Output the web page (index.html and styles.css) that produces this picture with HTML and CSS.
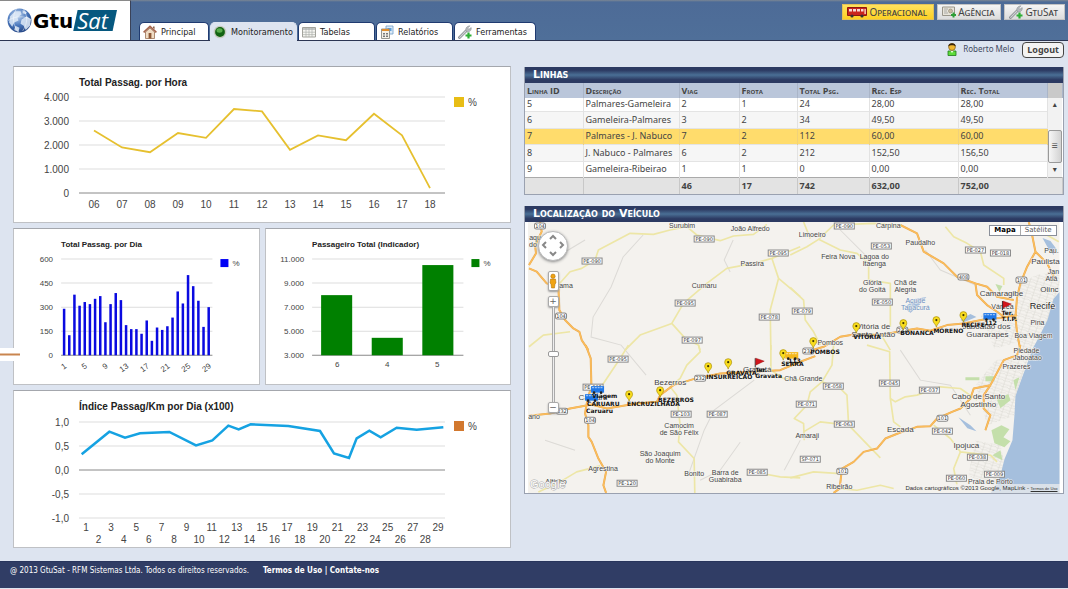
FILE: index.html
```html
<!DOCTYPE html>
<html lang="pt-BR">
<head>
<meta charset="utf-8">
<title>GtuSat - Monitoramento</title>
<link rel="stylesheet" href="styles.css">
</head>
<body>
<header class="top">
  <a class="logo" href="#" aria-label="GtuSat">
    <svg class="globe" viewBox="0 0 24 24" aria-hidden="true">
      <defs><radialGradient id="gl" cx=".4" cy=".3" r=".8"><stop offset="0" stop-color="#c9dcf3"/><stop offset=".5" stop-color="#4a78bd"/><stop offset="1" stop-color="#1c3a78"/></radialGradient></defs>
      <circle cx="12" cy="12" r="11.5" fill="url(#gl)"/>
      <path d="M3 8l5-5 5 0 1 3-4 3 1 3-4 2-2 4-3-4zM14 11l5-3 4 3-1 6-4 4-2-4-3-2zM15 2l4 2-1 2-3-1zM8 17l4 2-1 4-4-2z" fill="#dfeaf7" opacity=".85"/>
      <path d="M1 12c6-4 15-5 22-1M9 1c-4 6-4 15 2 22M16 1c4 7 4 14-1 21" fill="none" stroke="#fff" stroke-width=".6" opacity=".7"/>
    </svg>
    <span class="logo-gtu">Gtu</span><span class="logo-sat">Sat</span>
  </a>
  <nav class="tabs">
    <a class="tab" href="#"><svg viewBox="0 0 14 14"><path d="M2.500 7v6.500h9V7L7 3z" fill="#f0dcc4" stroke="#9a7256" stroke-width=".8"/><path d="M.6 7.400L7 1.300l6.400 6.100" fill="none" stroke="#a5654c" stroke-width="1.600"/><path d="M10 1.500h1.600V4L10 3z" fill="#8c6248"/><path d="M5.600 8h2.800v5.500H5.600z" fill="#8e5836"/></svg>Principal</a>
    <a class="tab active" href="#" aria-current="page"><svg viewBox="0 0 14 14"><circle cx="7" cy="7" r="6.300" fill="#c6cabf"/><circle cx="7" cy="7" r="4.900" fill="#126312"/><ellipse cx="6.500" cy="5.500" rx="3" ry="2.200" fill="#58ad4c"/></svg>Monitoramento</a>
    <a class="tab" href="#"><svg viewBox="0 0 14 14"><path d="M.5 2.500h13v9.500H.5z" fill="#f6f6f2" stroke="#a3a39c"/><path d="M1 3h12v2H1z" fill="#c2c5c4"/><path d="M1 7.200h12M1 9.600h12M4 3v9M7 3v9M10 3v9" stroke="#aeb0ac" stroke-width=".7"/></svg>Tabelas</a>
    <a class="tab" href="#"><svg viewBox="0 0 14 14"><path d="M6 1h7v8H6z" fill="#dcebf8" stroke="#6f9cc6" stroke-width=".8"/><path d="M7.500 3h4v3h-4z" fill="#5f9fd8"/><path d="M1.500 4h8v9.500h-8z" fill="#f4f1e8" stroke="#8b8b86" stroke-width=".9"/><path d="M2 4h7v2H2z" fill="#e08d2c"/><path d="M3 8h2v1.500H3zM6 8h2v1.500H6zM3 10.500h2V12H3zM6 10.500h2V12H6z" fill="#77787a"/></svg>Relatórios</a>
    <a class="tab" href="#"><svg viewBox="0 0 14 14"><use href="#wrench"/></svg>Ferramentas</a>
  </nav>
  <nav class="areas">
    <button class="area on" type="button"><svg class="wide" viewBox="0 0 20 12"><path d="M.5 1.500h19v8H.5z" fill="#c9251d" stroke="#8c1611"/><path d="M2 3h3v2.500H2zM6 3h3v2.500H6zM10 3h3v2.500h-3zM14 3h2.500v2.500H14z" fill="#f7dcd6"/><path d="M17.300 3h1.700v5h-1.700z" fill="#f5b5a5"/><circle cx="5" cy="10" r="1.600" fill="#333"/><circle cx="15" cy="10" r="1.600" fill="#333"/></svg>Operacional</button>
    <button class="area" type="button"><svg viewBox="0 0 14 14"><path d="M.5 2h12v8.500H.5z" fill="#e8e4da" stroke="#99958a"/><path d="M2 4h4M2 6h3M2 8h4" stroke="#999" stroke-width=".8"/><circle cx="8.500" cy="6" r="2" fill="#c9bba4" stroke="#8d8472" stroke-width=".6"/><path d="M9 10h5M11.500 7.500v5" stroke="#2d9e36" stroke-width="2"/></svg>Agência</button>
    <button class="area" type="button"><svg viewBox="0 0 14 14"><g id="wrench"><path d="M1.500 12.500L8 6" stroke="#888c90" stroke-width="2.800" stroke-linecap="round"/><path d="M1.700 12.300L8 6" stroke="#d0d3d5" stroke-width="1.200" stroke-linecap="round"/><path d="M12 .8L9.800 3l1 1.300 2.400-1.700c.6 2.500-1.500 4.800-4.500 4.200-2-2-.8-5.800 3.300-6z" fill="#b6babd" stroke="#868a8e" stroke-width=".5"/><path d="M7.500 10.500h6M10.500 7.500v6" stroke="#2fae35" stroke-width="2.200"/></g></svg>GtuSat</button>
  </nav>
</header>

<div class="userbar">
  <svg class="avatar" viewBox="0 0 10 14" aria-hidden="true"><path d="M1 9h8v4.500H1z" fill="#5edc3c" stroke="#1f7a1a" stroke-width=".8"/><path d="M3.500 9L5 11l1.500-2z" fill="#e9ffe2"/><circle cx="5" cy="5" r="3.400" fill="#f0b62e" stroke="#6b4b0c" stroke-width=".6"/><path d="M1.200 4.500C1 0 9 0 8.800 4.500 7 2.800 3 2.800 1.200 4.500z" fill="#3a240a"/></svg>
  <span>Roberto Melo</span>
  <button class="logout" type="button">Logout</button>
</div>

<main class="board">
  <section class="charts">
    <div class="card"><svg id="hora" viewBox="14 67 496 155" role="img" aria-label="Total Passag. por Hora"></svg></div>
    <div class="pair">
      <div class="card"><svg id="dia" viewBox="14 229 244 155" role="img" aria-label="Total Passag. por Dia"></svg></div>
      <div class="card"><svg id="total" viewBox="265 229 244 155" role="img" aria-label="Passageiro Total (Indicador)"></svg></div>
    </div>
    <div class="card"><svg id="indice" viewBox="14 391 496 156" role="img" aria-label="Índice Passag/Km por Dia (x100)"></svg></div>
    <svg class="stub" viewBox="0 0 20 13" aria-hidden="true"><path d="M0 0h20v13H0z" fill="#fff"/><path d="M0 6.500h20" stroke="#c9854f" stroke-width="2"/></svg>
  </section>

  <section class="side">
    <div class="panel">
      <h2 class="bar">Linhas</h2>
      <table class="lines">
        <colgroup><col class="c-id"><col class="c-desc"><col class="c-viag"><col class="c-frota"><col class="c-psg"><col class="c-rec"><col class="c-rec"><col class="c-scroll"></colgroup>
        <thead><tr><th>Linha ID</th><th>Descrição</th><th>Viag</th><th>Frota</th><th>Total Psg.</th><th>Rec. Esp</th><th>Rec. Total</th><th class="corner"></th></tr></thead>
        <tbody>
          <tr class="cut"><td>5</td><td>Palmares-Gameleira</td><td>2</td><td>1</td><td>24</td><td>28,00</td><td>28,00</td>
            <td class="scroll" rowspan="5"><div class="track"><button type="button" aria-label="Subir">▴</button><span class="space"></span><span class="grip">☰</span><button type="button" aria-label="Descer">▾</button></div></td></tr>
          <tr class="alt"><td>6</td><td>Gameleira-Palmares</td><td>3</td><td>2</td><td>34</td><td>49,50</td><td>49,50</td></tr>
          <tr class="sel"><td>7</td><td>Palmares - J. Nabuco</td><td>7</td><td>2</td><td>112</td><td>60,00</td><td>60,00</td></tr>
          <tr class="alt"><td>8</td><td>J. Nabuco - Palmares</td><td>6</td><td>2</td><td>212</td><td>152,50</td><td>156,50</td></tr>
          <tr><td>9</td><td>Gameleira-Ribeirao</td><td>1</td><td>1</td><td>0</td><td>0,00</td><td>0,00</td></tr>
        </tbody>
        <tfoot><tr><td></td><td></td><td>46</td><td>17</td><td>742</td><td>632,00</td><td colspan="2">752,00</td></tr></tfoot>
      </table>
    </div>

    <div class="panel">
      <h2 class="bar">Localização do Veículo</h2>
      <div class="map">
        <svg id="map" viewBox="528 222 531 271" role="img" aria-label="Mapa">
          <defs>
            <g id="pin"><path d="M0 0C-.5-3-3.500-4-3.500-7a3.500 3.500 0 0 1 7 0C3.500-4 .5-3 0 0z" fill="#f8dc1e" stroke="#a08400" stroke-width=".6"/><circle cy="-7" r="1.100" fill="#3b3200"/></g>
            <g id="flag"><path d="M0 9V0" stroke="#333"/><path d="M.5 0L9 3 .5 7z" fill="#d3161c" stroke="#8c0d10" stroke-width=".4"/></g>
            <g id="bus"><path d="M0 1h13v6.500H0z"/><path d="M1 2.500h11" stroke="#fff" stroke-opacity=".55" stroke-width="1.200" stroke-dasharray="2 .8"/><circle cx="3" cy="7.500" r="1.300" fill="#222"/><circle cx="10" cy="7.500" r="1.300" fill="#222"/></g>
            <pattern id="streets" width="7" height="6" patternUnits="userSpaceOnUse" patternTransform="rotate(18)"><path d="M0 1h7M2 0v6M0 4l7-1" stroke="#d9d6d0" stroke-width=".5"/></pattern>
          </defs>
          <path d="M528 222h531v271H528z" fill="#f4f2ee"/>
          <path d="M1019 285l16-10 24-4v30l-8 25-12 40-16-2-8-35zM980 315l40-8 14 30-40 12zM995 360l32-5-12 60-28 10-12-40zM975 440l25 5 6 25-14 18-24-13z" fill="url(#streets)"/>
          <g fill="none" stroke="#dcdad6" stroke-width="1">
            <path d="M643 235l-20 22-12 30-18 30-2 20 30 8 25 30M733 240l-9 20 6 12M688 475l16-45 10-20 40-30M560 255l25-15M545 440l30 10M800 440l-16 30M925 250l15 20 35 15M840 230l30 30M900 350l20 30 30 5 20 30M700 480l20-10 20-28"/>
          </g>
          <g class="water">
            <path d="M1059 292L1053 299 1047 320 1038 338 1032 349 1028 360 1021 379 1015 396 1014 415 1012 440 1004 459 1000 475 994 487 990 493H1059z"/>
            <path d="M904 308l10-9 12-2-7 8-9 8zM1042 238l8 3 6 8-3 6-6-8zM960 320l10-6 6 3-12 5zM958 417l12 8 6 6-9-3z"/>
          </g>
          <path d="M991 430l10-5 8 4-6 8 7 4-6 6-10-4zM965 377h14v3h-14zM985 376h9v5h-9zM996 398l12-4 2 6-10 8zM995 284l7 2-3 6zM1013 380l6-3-4 13zM992 455l8-5 2 10z" fill="#c4dfab"/>
          <g class="minor">
            <g transform="translate(520 200) scale(.3333)"><path d="M27 440l43-35 80-10M110 260l40-45 35-10 40-25 10-30 95-50 70 3 50-13 50-10 30 25 70 17 40-14 60-5 40-30M315 450l45-45 95-35 35-60 70-60 60-45 80-15 55-15 85-35M755 175l20 60 65 55M775 235l-25 95 2 120M455 370l45 50 35 15 5 15"/></g>
            <g transform="translate(790 200) scale(.3333)"><path d="M0 165l50-25 35-22 45-43 120-5 80 5M85 118l65 32 50 10 35 30v50l65 10v130M465 80l25 30 40 20 40 25 10 40 60 40v20M0 262l40 38 5 60 25 35 20 40M270 400l30 50M40 66l20 50M760 100l45 25"/></g>
            <g transform="translate(520 345) scale(.3333)"><path d="M215 150l35-35 50-75 25-40M535 0l5 20-40 40-20 40-30 25 20 25 10 90-5 50 47 50 2 103M55 440l65-30 50-30 70-18M752 0v75l38 25 50 5M700 380l80 15 60 3"/></g>
            <g transform="translate(790 345) scale(.3333)"><path d="M130 0l-5 60-30 50-35 30-10 40-38 40 28 15 2 50M95 110l55 20 20 20 5 90 95 98M40 260l50-30 85 10M230 0l68 20 2 140 15 10 30-15 35-5 70-25 60 5 50 35M300 160l10 70 20 15M0 398l70-18 80 5M150 430l50 5 70-15 40 10M430 240l50 40 30 40-20 50 10 50M510 320l90 10 20 20"/></g>
          </g>
          <g id="majors"></g>
          <g id="shields"></g>
          <g id="places"></g>
          <g id="stops"></g>
          <text class="brand" x="530" y="488">Google</text>
        </svg>
        <div class="pan">
          <button type="button" class="n" aria-label="Norte"><svg viewBox="0 0 8 8"><path d="M1 6l3-3 3 3"/></svg></button>
          <button type="button" class="w" aria-label="Oeste"><svg viewBox="0 0 8 8"><path d="M6 1L3 4l3 3"/></svg></button>
          <button type="button" class="e" aria-label="Leste"><svg viewBox="0 0 8 8"><path d="M2 1l3 3-3 3"/></svg></button>
          <button type="button" class="s" aria-label="Sul"><svg viewBox="0 0 8 8"><path d="M1 2l3 3 3-3"/></svg></button>
        </div>
        <div class="zoom">
          <button type="button" class="man" aria-label="Street View"><svg viewBox="0 0 8 16"><circle cx="4" cy="3.200" r="2.200" fill="#f0a414" stroke="#a86a08" stroke-width=".5"/><path d="M1.500 6h5l.5 4-1 1-.5 4h-3L2 11l-1-1z" fill="#f0a414" stroke="#a86a08" stroke-width=".5"/></svg></button>
          <button type="button" class="step" aria-label="Aumentar zoom">+</button>
          <input class="level" type="range" min="0" max="18" value="9" aria-label="Zoom">
          <button type="button" class="step" aria-label="Diminuir zoom">−</button>
        </div>
        <div class="kinds"><button type="button" class="kind on">Mapa</button><button type="button" class="kind">Satélite</button></div>
        <p class="credit">Dados cartográficos ©2013 Google, MapLink - <a href="#">Termos de Uso</a></p>
      </div>
    </div>
  </section>
</main>

<footer class="foot">
  <span>@ 2013 GtuSat - RFM Sistemas Ltda. Todos os direitos reservados.</span>
  <nav><a href="#">Termos de Uso</a> | <a href="#">Contate-nos</a></nav>
</footer>
<script src="app.js"></script>
</body>
</html>
```
FILE: styles.css
```css
* { box-sizing: border-box; }
body { margin: 0; background: #dde4f0; color: #444; font: 9px/14px "Noto Sans", "Open Sans", sans-serif; }
button { font: inherit; color: inherit; margin: 0; padding: 0; cursor: pointer; }
a { color: inherit; text-decoration: none; }
svg { display: block; }

.top { display: flex; height: 41px; background: linear-gradient(#7b8694 0, #4d6b97 2px, #4f6f99); border-bottom: 1px solid #2b3553; }
.logo { display: flex; align-items: center; width: 131px; padding-left: 7px; background: #fff; border-right: 1px solid #3a4258; border-top: 1px solid #8a8a8a; }
.globe { width: 25px; height: 25px; }
.logo-gtu { color: #000; font: bold 20px/22px "DejaVu Sans", sans-serif; margin-left: 1px; }
.logo-sat { padding: 0 9px 0 4px; background: #06587f; color: #fff; font: italic 22px/21px "Open Sans", sans-serif; clip-path: polygon(10% 0, 100% 0, 90% 100%, 0 100%); }
.tabs { display: flex; align-items: flex-end; margin-left: 8px; gap: 1px; }
.tab { display: flex; align-items: center; gap: 4px; height: 18px; min-width: 77px; padding: 0 3px; background: #fff; border: 1px solid #1f3a70; border-bottom: 0; border-radius: 5px 5px 0 0; color: #222; font: 9px/16px "DejaVu Sans Condensed", "DejaVu Sans", sans-serif; }
.tab:first-child { min-width: 70px; }
.tab:last-child { min-width: 82px; }
.tab svg { width: 14px; height: 14px; }
.tab.active { min-width: 87px; padding: 0 2px; background: #dde4f0; border-color: #dde4f0; margin-bottom: -1px; height: 19px; }
.areas { display: flex; gap: 3px; margin-left: auto; padding: 4px 3px 0 0; }
.area { display: flex; align-items: center; gap: 2px; height: 16px; padding: 0 6px 0 4px; border: 1px solid #c3c3c3; background: linear-gradient(#f5f5f5, #dcdcdc); color: #444; font: small-caps 10px/14px "Noto Sans", sans-serif; }
.area svg { width: 14px; height: 14px; }
.area svg.wide { width: 20px; height: 12px; }
.area.on { background: linear-gradient(#ffe25e, #fdd023); border-color: #e3c257; }

.userbar { display: flex; align-items: flex-start; justify-content: flex-end; height: 25px; padding: 1px 4px 0 0; color: #3f4a60; font-size: 8px; }
.avatar { width: 10px; height: 14px; margin-right: 6px; }
.logout { height: 16px; margin-left: 8px; padding: 0 4px; border: 1px solid #444; border-radius: 4px; background: #f3f3f3; color: #444; font: bold 9px/12px "Noto Sans", sans-serif; }

.board { display: grid; grid-template-columns: minmax(0, 498fr) minmax(0, 538fr); gap: 13px; align-items: start; padding: 0 6px 13px 13px; }
.charts { position: relative; display: grid; gap: 5px; }
.pair { display: grid; grid-template-columns: 1fr 1fr; gap: 5px; }
.card { background: #fff; border: 1px solid #bfc1c5; border-top-color: #a4a7ad; }
.card svg { width: 100%; }
.stub { position: absolute; left: -13px; top: 282px; width: 20px; height: 13px; }
.t { font-family: "Liberation Sans", sans-serif; font-size: 10px; fill: #444; }
.t.small { font-size: 8px; }
.t.title { font-weight: bold; fill: #222; }

.side { display: grid; gap: 11px; padding-top: 1px; }
.bar { margin: 0; height: 16px; padding-left: 8px; background: linear-gradient(#2c3a62 20%, #4a6f95 50%, #2c3a62 80%); color: #fff; font: bold small-caps 11px/16px "DejaVu Sans", sans-serif; }
.panel { border: 1px solid #9aa1b0; border-top: 0; background: #fff; }
.lines { width: 100%; table-layout: fixed; border-collapse: collapse; }
.c-id { width: 58px; } .c-desc { width: 96px; } .c-viag { width: 60px; } .c-frota { width: 58px; } .c-psg { width: 72px; } .c-rec { width: 89px; } .c-scroll { width: 15px; }
.lines th, .lines td { height: 16px; padding: 0 2px; text-align: left; white-space: nowrap; line-height: 14px; border-right: 1px solid #e2e2e2; }
.lines th { height: 15px; background: #bac6da; border-color: #aab5c8; font: bold small-caps 9px/14px "Open Sans", sans-serif; }
.lines .corner { background: #c9c9c9; }
.lines .cut td { height: 13px; line-height: 12px; }
.lines .alt td:not(.scroll) { height: 17px; background: #f6f6f6; border-top: 1px solid #e4e4e4; border-bottom: 1px solid #e4e4e4; }
.lines .sel td { background: #ffdc6c; border-color: #f0d27a; }
.lines tfoot td { background: #e3e3e3; border-top: 1px solid #aaa; border-right-color: #c8c8c8; font-weight: bold; }
.lines .scroll { height: 79px; padding: 0; background: #f2f2f2; border: 0; }
.track { display: flex; flex-direction: column; height: 79px; }
.track button { height: 14px; border: 0; background: none; font: 8px/14px "DejaVu Sans", sans-serif; }
.space { flex: 1; }
.grip { height: 33px; border: 1px solid #999; border-radius: 2px; background: linear-gradient(90deg, #f6f6f6, #d2d2d2); text-align: center; font: 7px/30px "DejaVu Sans", sans-serif; }

.map { position: relative; padding: 0 3px; overflow: hidden; }
.map > svg { width: 100%; }
.water { fill: #a5bfdd; }
.minor { fill: none; stroke: #ede6a6; stroke-width: 5; stroke-linejoin: round; }
.major-edge { fill: none; stroke: #e8a850; stroke-width: 6; stroke-linejoin: round; }
.major { fill: none; stroke: #fbbd5c; stroke-width: 4; stroke-linejoin: round; }
.place { font: 7px "Liberation Sans", sans-serif; fill: #444; text-anchor: middle; stroke: #f7f6f3; stroke-width: 1; paint-order: stroke; }
.place.mid { font-size: 8px; }
.place.big { font-size: 9px; fill: #222; }
.place.lake { fill: #6c8fc0; }
.sign { font: 5px "DejaVu Sans", sans-serif; fill: #333; text-anchor: middle; }
.plate { fill: #fff; stroke: #888; stroke-width: 1; }
.stop { font: bold 6px "DejaVu Sans", sans-serif; fill: #111; }
.brand { font: 11px "Liberation Sans", sans-serif; fill: #fff; stroke: #aaa; stroke-width: 1; paint-order: stroke; }

.pan { position: absolute; left: 13px; top: 9px; display: grid; grid-template: repeat(3, 1fr) / repeat(3, 1fr); width: 30px; height: 30px; padding: 1px; border: 1px solid #bbb; border-radius: 50%; background: #fff; box-shadow: 0 1px 3px #888; }
.pan button { display: grid; place-items: center; border: 0; background: none; }
.pan svg { width: 8px; height: 8px; fill: none; stroke: #888; stroke-width: 2; }
.n { grid-area: 1 / 2; } .w { grid-area: 2 / 1; } .e { grid-area: 2 / 3; } .s { grid-area: 3 / 2; }
.zoom { position: absolute; left: 23px; top: 49px; display: flex; flex-direction: column; align-items: center; width: 10px; }
.zoom button { border: 1px solid #aaa; border-radius: 2px; background: #fff; box-shadow: 0 1px 2px #999; }
.man { width: 11px; height: 20px; margin-bottom: 5px; }
.man svg { width: 8px; height: 16px; margin: auto; }
.step { width: 11px; height: 11px; color: #666; font: 9px/8px "DejaVu Sans", sans-serif; }
.level { appearance: none; writing-mode: vertical-lr; direction: rtl; width: 11px; height: 95px; margin: 0; background: linear-gradient(90deg, #0000 4px, #aaa 4px, #aaa 5px, #eee 5px, #eee 6px, #aaa 6px, #aaa 7px, #0000 7px); }
.level::-webkit-slider-thumb { appearance: none; width: 11px; height: 6px; border: 1px solid #999; border-radius: 2px; background: #fff; }
.kinds { position: absolute; right: 6px; top: 3px; display: flex; border: 1px solid #8a8f99; background: #fff; }
.kind { height: 9px; padding: 0 4px; border: 0; background: #fff; color: #555; font: 7px/9px "DejaVu Sans", sans-serif; }
.kind.on { color: #000; font-weight: bold; border-right: 1px solid #aaa; }
.credit { position: absolute; right: 3px; bottom: 0; margin: 0; padding: 0 2px; background: #f4f2eeaa; color: #333; font: 6px/9px "Liberation Sans", sans-serif; white-space: nowrap; }
.credit a { font-size: 4px; text-decoration: underline; }

.foot { display: flex; gap: 14px; height: 27px; padding: 2px 10px; background: #303d65; color: #fff; font: 8px/14px "DejaVu Sans Condensed", "DejaVu Sans", sans-serif; border-top: 1px solid #28355c; }
.foot nav { font-weight: bold; }
```
FILE: app.js
```javascript
const NS = 'http://www.w3.org/2000/svg';
function add(parent, name, attrs, text) {
  const node = document.createElementNS(NS, name);
  for (const key in attrs) node.setAttribute(key, attrs[key]);
  if (text !== undefined) node.textContent = text;
  parent.appendChild(node);
  return node;
}
const byId = id => document.getElementById(id);

function frame(svg, o) {
  const cls = o.small ? 't small' : 't';
  const drop = o.small ? 3 : 4;
  add(svg, 'text', { class: cls + ' title', x: o.x1, y: o.titleY }, o.title);
  o.ticks.forEach((label, i) => {
    const y = o.top + (o.bottom - o.top) * i / (o.ticks.length - 1);
    const axis = i === o.axis;
    add(svg, 'path', { d: `M${o.x1} ${y}H${o.x2}`, stroke: axis ? '#888' : '#ddd', 'stroke-width': 1 });
    add(svg, 'text', { class: cls, x: o.x1 - (o.small ? 8 : 10), y: y + drop, 'text-anchor': 'end' }, label);
  });
  const s = o.small ? 8 : 10;
  add(svg, 'rect', { x: o.legendX, y: o.legendY, width: s, height: s, fill: o.color });
  add(svg, 'text', { class: cls, x: o.legendX + s + 4, y: o.legendY + s - 1 }, '%');
}

const hora = byId('hora');
frame(hora, { title: 'Total Passag. por Hora', titleY: 86, x1: 79, x2: 445, top: 97, bottom: 193, axis: 4, ticks: ['4.000', '3.000', '2.000', '1.000', '0'], legendX: 454, legendY: 97, color: '#e8bd15' });
const horas = [2600, 1900, 1700, 2500, 2300, 3500, 3400, 1800, 2400, 2200, 3300, 2400, 200];
add(hora, 'polyline', { points: horas.map((v, i) => `${94 + i * 28},${193 - v * .024}`).join(' '), fill: 'none', stroke: '#e6c02f', 'stroke-width': 1.8 });
horas.forEach((v, i) => add(hora, 'text', { class: 't', x: 94 + i * 28, y: 208, 'text-anchor': 'middle' }, String(i + 6).padStart(2, '0')));

const dia = byId('dia');
frame(dia, { small: true, title: 'Total Passag. por Dia', titleY: 247, x1: 61, x2: 212, top: 259, bottom: 355, axis: 4, ticks: ['600', '450', '300', '150', '0'], legendX: 220, legendY: 259, color: '#0000f5' });
const dias = [290, 125, 378, 309, 332, 319, 352, 369, 206, 319, 388, 344, 188, 163, 163, 134, 217, 90, 173, 158, 181, 235, 398, 323, 500, 431, 340, 177, 300];
dias.forEach((v, i) => {
  const x = 64 + i * 144.300 / 28;
  add(dia, 'rect', { x: x - 1.250, y: 355 - v * .16, width: 2.500, height: v * .16, fill: '#0a0ae0' });
  if (i % 4 === 0) add(dia, 'text', { class: 't small', x: x + 3, y: 367, 'text-anchor': 'end', transform: `rotate(-35 ${x + 3} 367)` }, i + 1);
});

const total = byId('total');
frame(total, { small: true, title: 'Passageiro Total (Indicador)', titleY: 247, x1: 311, x2: 462, top: 259, bottom: 355, axis: 4, ticks: ['11.000', '9.000', '7.000', '5.000', '3.000'], legendX: 470, legendY: 259, color: '#008000' });
[['6', 8000], ['4', 4450], ['5', 10500]].forEach(([label, v], i) => {
  const h = (v - 3000) * .012;
  add(total, 'rect', { x: 320 + i * 50.500, y: 355 - h, width: 31, height: h, fill: '#008000' });
  add(total, 'text', { class: 't small', x: 336 + i * 50, y: 367, 'text-anchor': 'middle' }, label);
});

const indice = byId('indice');
frame(indice, { title: 'Índice Passag/Km por Dia (x100)', titleY: 410, x1: 79, x2: 445, top: 422, bottom: 518, axis: 2, ticks: ['1,0', '0,5', '0,0', '-0,5', '-1,0'], legendX: 454, legendY: 421, color: '#d2782e' });
const path = [[245, 205], [328, 137], [375, 155], [420, 142], [508, 138], [588, 178], [637, 163], [685, 119], [716, 130], [752, 115], [865, 120], [960, 135], [1002, 202], [1047, 216], [1070, 157], [1108, 134], [1142, 154], [1190, 125], [1250, 131], [1330, 124]];
add(indice, 'polyline', { points: path.map(p => `${p[0] / 3},${386 + p[1] / 3}`).join(' '), fill: 'none', stroke: '#15a2e2', 'stroke-width': 2.500 });
for (let d = 1; d <= 29; d++) add(indice, 'text', { class: 't', x: 86 + (d - 1) * 12.570, y: d % 2 ? 531 : 543, 'text-anchor': 'middle' }, d);

const majors = [
  [520, 200, 'M60 65l5 30-20 40 3 25-21 35M27 205l23 10 30 35 35 10 3 70 17 30 25 25 18 10 7 25 20 30'],
  [520, 345, 'M197 0l15 40 2 80-14 55-5 30 10 35v35l10 15 20 50 23 40-8 40 8 23M27 212l63-7 60-15 65-12 45 12 90-15 60-5 10-20 40-30 60-18 80-17 100-5 80-5 60-25 45-17'],
  [790, 200, 'M50 455l50-15 50-30 50-8 70 3 70-13 40-7 40 7 50-17 50-5 60-12 60-6 40-7M330 75l50 25 20 55 60 35 40 40 55 20 5 35 30 30 30 20 20 15M555 250l35 10 30 30 50 10M715 66l10 39 10 50-25 45-20 50-10 40-5 60 5 50 10 50M735 155l35 35 20 40'],
  [790, 345, 'M690 0l-10 30-40 15-40 75-50 10-10 30-30 30-25 10-45 20-20 23-40 2-50 17-45 18-25 30-40 10-30 30-35 20-7 60-18 13M600 120l-20 30v40l20 20-15 45']
];
['major-edge', 'major'].forEach(c => majors.forEach(([x, y, d]) => add(byId('majors'), 'path', { class: c, d, transform: `translate(${x} ${y}) scale(.3333)` })));

const shields = [[540, 226, '104'], [704, 239, 'PE-090'], [592, 261, 'PE-090'], [778, 253, 'PE-095'], [685, 303, 'PE-095'], [769, 317, 'PE-078'], [692, 340, 'PE-097'], [561, 316, '104'], [844, 226, 'PE-090'], [881, 246, 'PE-053'], [975, 250, 'PE-027'], [1000, 253, 'PE-018'], [963, 277, '408'], [1021, 280, '101'], [882, 302, 'PE-050'], [802, 311, 'PE-079'], [618, 359, 'PE-095'], [593, 387, 'PE-095'], [700, 378, '232'], [562, 411, '232'], [590, 420, '104'], [681, 414, 'PE-103'], [717, 414, 'PE-087'], [627, 483, 'PE-120'], [757, 472, 'PE-085'], [808, 351, '232'], [902, 330, '232'], [833, 386, 'PE-058'], [889, 383, 'PE-045'], [929, 390, 'PE-037'], [806, 404, 'PE-071'], [844, 424, 'PE-063'], [810, 459, 'SP-071'], [942, 418, '101'], [842, 471, '101'], [942, 431, 'PE-042'], [977, 457, 'PE-038'], [956, 478, 'PE-060'], [994, 474, 'PE-009']];
shields.forEach(([x, y, s]) => {
  const w = s.length > 3 ? 20 : 11;
  add(byId('shields'), 'rect', { class: 'plate', x: x - w / 2, y: y - 3, width: w, height: 6, rx: s.length > 3 ? 0 : 2 });
  add(byId('shields'), 'text', { class: 'sign', x, y: y + 2 }, s);
});

const places = [[682, 226, 'Surubim'], [750, 229, 'João Alfredo'], [752, 264, 'Passira'], [704, 286, 'Cumaru'], [535, 238, 'aqu'], [533, 245, 'do'], [565, 286, 'tama'], [812, 235, 'Limoeiro'], [888, 226, 'Carpina'], [920, 243, 'Paudalho'], [838, 257, 'Feira Nova'], [874, 257, 'Lagoa do'], [874, 264, 'Itaenga'], [872, 283, 'Glória'], [872, 290, 'do Goitá'], [905, 283, 'Chã de'], [905, 290, 'Alegria'], [915, 301, 'Açude', 'lake'], [915, 308, 'Tapacurá', 'lake'], [1001, 294, 'Camaragibe', 'mid'], [1002, 307, 'Várzea'], [1042, 307, 'Recife', 'big'], [1037, 323, 'Pina'], [1033, 336, 'Boa Viagem'], [986, 327, 'Jaboatão dos', 'mid'], [987, 335, 'Guararapes', 'mid'], [873, 327, 'Vitória de', 'mid'], [873, 335, 'Santo Antão', 'mid'], [830, 343, 'Pombos'], [1051, 251, 'Pau.'], [1045, 262, 'Paulista', 'mid'], [1053, 272, 'Jan'], [1051, 279, 'Atlâ'], [1049, 290, 'Olinc', 'mid'], [670, 383, 'Bezerros', 'mid'], [593, 398, 'Caruaru', 'mid'], [757, 370, 'Gravatá', 'mid'], [679, 426, 'Camocim'], [679, 433, 'de São Félix'], [660, 454, 'São Joaquim'], [660, 461, 'do Monte'], [603, 469, 'Agrestina'], [556, 482, 'Altinho'], [694, 474, 'Bonito'], [725, 473, 'Barra de'], [725, 480, 'Guabiraba'], [803, 379, 'Chã Grande'], [807, 436, 'Amaraji'], [900, 430, 'Escada', 'mid'], [839, 487, 'Ribeirão'], [978, 397, 'Cabo de Santo', 'mid'], [978, 405, 'Agostinho', 'mid'], [966, 446, 'Ipojuca', 'mid'], [1026, 351, 'Piedade'], [1027, 358, 'Jaboatao'], [1016, 367, 'Prazeres'], [990, 482, 'Praia de Porto'], [534, 417, 'ano']];
places.forEach(([x, y, s, c]) => add(byId('places'), 'text', { class: 'place ' + (c || ''), x, y: y + 2 }, s));

const stops = byId('stops');
[[813, 348], [856, 333], [903, 330], [936, 327], [963, 322], [708, 373], [728, 369], [629, 401], [660, 397], [783, 360]].forEach(([x, y]) => add(stops, 'use', { href: '#pin', x, y }));
[[1002, 301], [755, 358]].forEach(([x, y]) => add(stops, 'use', { href: '#flag', x, y }));
[[983, 312, '#1f78e8'], [591, 385, '#1f78e8'], [585, 393, '#1f78e8'], [785, 351, '#f5b81c']].forEach(([x, y, fill]) => add(stops, 'use', { href: '#bus', x, y, fill }));
[[853, 339, 'VITÓRIA'], [900, 335, 'BONANCA'], [933, 333, 'MORENO'], [961, 327, 'RECIFE'], [984, 325, '112'], [1001, 315, 'Ter.'], [1001, 321, 'T.I.P.'], [810, 354, 'POMBOS'], [781, 366, 'SERRA'], [788, 363, '113'], [726, 375, 'GRAVATA'], [706, 379, 'INSURREICAO'], [755, 372, 'Ter.'], [755, 378, 'Gravata'], [627, 406, 'ENCRUZILHADA'], [658, 402, 'BEZERROS'], [587, 406, 'CARUARU'], [586, 413, 'Caruaru'], [592, 398, 'Viagem']].forEach(([x, y, s]) => add(stops, 'text', { class: 'stop', x, y }, s));
```
